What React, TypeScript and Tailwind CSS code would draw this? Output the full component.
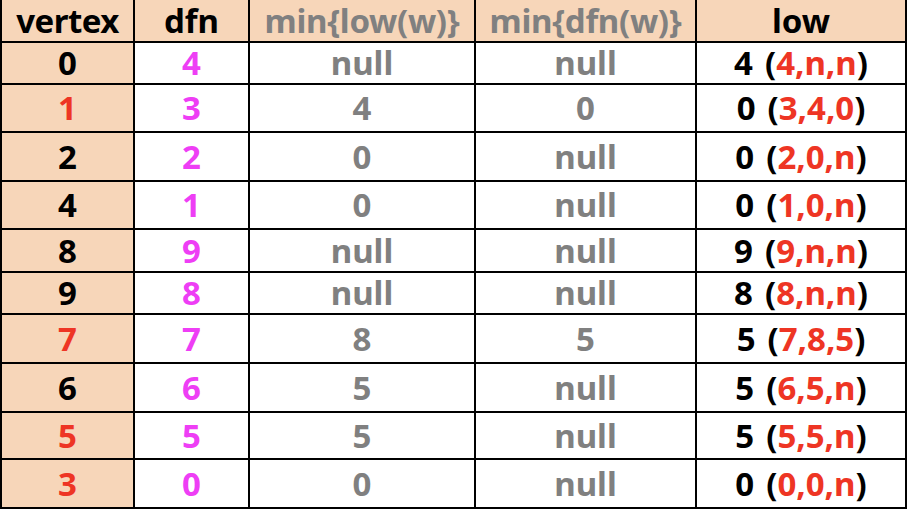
import React from "react";

type Row = {
  vertex: string;
  vertexRed?: boolean;
  dfn: string;
  minLow: string;
  minDfn: string;
  low: string;
  parts: string;
};

const ROWS: Row[] = [
  { vertex: "0", dfn: "4", minLow: "null", minDfn: "null", low: "4", parts: "4,n,n" },
  { vertex: "1", vertexRed: true, dfn: "3", minLow: "4", minDfn: "0", low: "0", parts: "3,4,0" },
  { vertex: "2", dfn: "2", minLow: "0", minDfn: "null", low: "0", parts: "2,0,n" },
  { vertex: "4", dfn: "1", minLow: "0", minDfn: "null", low: "0", parts: "1,0,n" },
  { vertex: "8", dfn: "9", minLow: "null", minDfn: "null", low: "9", parts: "9,n,n" },
  { vertex: "9", dfn: "8", minLow: "null", minDfn: "null", low: "8", parts: "8,n,n" },
  { vertex: "7", vertexRed: true, dfn: "7", minLow: "8", minDfn: "5", low: "5", parts: "7,8,5" },
  { vertex: "6", dfn: "6", minLow: "5", minDfn: "null", low: "5", parts: "6,5,n" },
  { vertex: "5", vertexRed: true, dfn: "5", minLow: "5", minDfn: "null", low: "5", parts: "5,5,n" },
  { vertex: "3", vertexRed: true, dfn: "0", minLow: "0", minDfn: "null", low: "0", parts: "0,0,n" },
];

const cell = "flex items-center justify-center leading-[40px] overflow-visible";

export default function App() {
  return (
    <div className="w-[908px] h-[512px] bg-white" style={{ fontFamily: '"Noto Sans", "Open Sans", sans-serif' }}>
      <div className="w-[907px] grid grid-cols-[131px_113px_224px_219px_208px] grid-rows-[41px_40px_46px_47px_46px_41px_40px_47px_47px_45px_47px] gap-[2px] bg-black pl-[2px] pr-[2px] pb-[2px] text-[33px] font-bold">
        <div className={`${cell} bg-[#f7d6b9] text-black tracking-[-0.5px]`}>vertex</div>
        <div className={`${cell} bg-[#f7d6b9] text-black`}>dfn</div>
        <div className={`${cell} bg-[#f7d6b9] text-[#808080] tracking-[-0.3px]`}>min{"{"}low(w){"}"}</div>
        <div className={`${cell} bg-[#f7d6b9] text-[#808080] tracking-[-0.3px]`}>min{"{"}dfn(w){"}"}</div>
        <div className={`${cell} bg-[#f7d6b9] text-black`}>low</div>
        {ROWS.map((r, i) => (
          <React.Fragment key={i}>
            <div className={`${cell} bg-[#f7d6b9] ${r.vertexRed ? "text-[#ee3524]" : "text-black"}`}>{r.vertex}</div>
            <div className={`${cell} bg-white text-[#ee3ef5]`}>{r.dfn}</div>
            <div className={`${cell} bg-white text-[#808080]`}>{r.minLow}</div>
            <div className={`${cell} bg-white text-[#808080]`}>{r.minDfn}</div>
            <div className={`${cell} bg-white text-black`}>
              <span className="mr-[12px]">{r.low}</span>
              <span>(</span>
              <span className="text-[#ee3524]">{r.parts}</span>
              <span>)</span>
            </div>
          </React.Fragment>
        ))}
      </div>
    </div>
  );
}
